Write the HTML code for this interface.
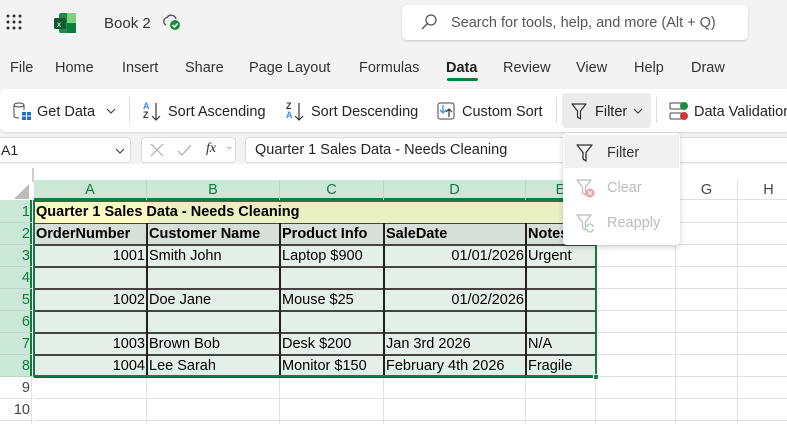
<!DOCTYPE html>
<html><head><meta charset="utf-8"><style>
*{box-sizing:border-box;margin:0;padding:0}
body{width:787px;height:424px;overflow:hidden;background:#f3f3f3;font-family:"Segoe UI","Liberation Sans",sans-serif;position:relative;color:#242424}
.a{position:absolute}
.t{font-size:14px;white-space:nowrap}
.grid{position:absolute;left:0;top:164px;width:787px;height:260px;background:#fff}
.cell{position:absolute;font-family:"Liberation Sans",Arial,sans-serif;font-size:14.5px;color:#000;white-space:nowrap;overflow:hidden;line-height:23px;padding:0 2px}
</style></head><body>
<div class="a" style="left:6px;top:14px;width:16px;height:16px">
<svg width="16" height="16"><g fill="#333"><circle cx="2" cy="2" r="1.5"/><circle cx="8" cy="2" r="1.5"/><circle cx="14" cy="2" r="1.5"/><circle cx="2" cy="8" r="1.5"/><circle cx="8" cy="8" r="1.5"/><circle cx="14" cy="8" r="1.5"/><circle cx="2" cy="14" r="1.5"/><circle cx="8" cy="14" r="1.5"/><circle cx="14" cy="14" r="1.5"/></g></svg></div>
<svg class="a" style="left:54px;top:13px" width="22" height="20"><rect x="5" y="0" width="17" height="20" rx="2" fill="#1f8a4c"/><rect x="13" y="0" width="9" height="10" fill="#7fd07c"/><rect x="13" y="10" width="9" height="10" fill="#107c41"/><rect x="0" y="5" width="12" height="11" rx="1.5" fill="#0e5c2f"/><text x="3" y="14" font-size="8" fill="#fff" font-family="Liberation Sans">x</text></svg>
<div class="a t" style="left:104px;top:15px;font-size:15px;color:#333">Book 2</div>
<svg class="a" style="left:162px;top:13px" width="20" height="18"><path d="M4 12 a4 4 0 0 1 1-7.5 a5 5 0 0 1 9 1.5" fill="none" stroke="#555" stroke-width="1.4"/><circle cx="13" cy="12" r="5" fill="#1e8c3e"/><path d="M10.5 12 l2 2 l3-3.5" stroke="#fff" fill="none" stroke-width="1.4"/></svg>
<div class="a" style="left:402px;top:5px;width:346px;height:35px;background:#fff;border-radius:5px;box-shadow:0 1px 2px rgba(0,0,0,.2)"></div>
<svg class="a" style="left:421px;top:14px" width="16" height="16"><circle cx="10" cy="6" r="5" fill="none" stroke="#555" stroke-width="1.3"/><path d="M6.5 9.5 L1 15" stroke="#555" stroke-width="1.4"/></svg>
<div class="a t" style="left:451px;top:15px;font-size:14.5px;color:#555">Search for tools, help, and more (Alt + Q)</div>
<div class="a t" style="left:10px;top:60px;font-size:14.5px;color:#333">File</div>
<div class="a t" style="left:55px;top:60px;font-size:14.5px;color:#333">Home</div>
<div class="a t" style="left:122px;top:60px;font-size:14.5px;color:#333">Insert</div>
<div class="a t" style="left:185px;top:60px;font-size:14.5px;color:#333">Share</div>
<div class="a t" style="left:249px;top:60px;font-size:14.5px;color:#333">Page Layout</div>
<div class="a t" style="left:359px;top:60px;font-size:14.5px;color:#333">Formulas</div>
<div class="a t" style="left:446px;top:60px;font-size:14.5px;color:#222;font-weight:bold">Data</div>
<div class="a" style="left:447px;top:78px;width:31px;height:3px;background:#107c41;border-radius:2px"></div>
<div class="a t" style="left:503px;top:60px;font-size:14.5px;color:#333">Review</div>
<div class="a t" style="left:576px;top:60px;font-size:14.5px;color:#333">View</div>
<div class="a t" style="left:634px;top:60px;font-size:14.5px;color:#333">Help</div>
<div class="a t" style="left:691px;top:60px;font-size:14.5px;color:#333">Draw</div>
<div class="a" style="left:0;top:89px;width:787px;height:43px;background:#fff;border-radius:6px 0 0 6px;box-shadow:0 1px 2px rgba(0,0,0,.12)"></div>
<svg class="a" style="left:12px;top:101px" width="20" height="20"><ellipse cx="7" cy="4" rx="5" ry="2" fill="none" stroke="#444"/><path d="M2 4 v11 q0 2 5 2 M12 4 v5" fill="none" stroke="#444"/><rect x="10" y="11" width="9" height="8" fill="#1a73c8"/><path d="M14.5 11v8M10 15h9" stroke="#fff"/></svg>
<div class="a t" style="left:37px;top:104px;font-size:14.5px">Get Data</div>
<svg class="a" style="left:106px;top:108px" width="10" height="7"><path d="M1 1l4 4 4-4" fill="none" stroke="#444" stroke-width="1.2"/></svg>
<div class="a" style="left:129px;top:97px;width:1px;height:26px;background:#ddd"></div>
<div class="a" style="left:143px;top:102px;font:bold 9px 'Liberation Sans';color:#3a8ee6;line-height:9px">A<br><span style="color:#333">Z</span></div>
<svg class="a" style="left:151px;top:102px" width="10" height="20"><path d="M5 1v17M1 14l4 4 4-4" fill="none" stroke="#333" stroke-width="1.2"/></svg>
<div class="a t" style="left:168px;top:104px;font-size:14.5px">Sort Ascending</div>
<div class="a" style="left:286px;top:102px;font:bold 9px 'Liberation Sans';color:#333;line-height:9px">Z<br><span style="color:#3a8ee6">A</span></div>
<svg class="a" style="left:294px;top:102px" width="10" height="20"><path d="M5 1v17M1 14l4 4 4-4" fill="none" stroke="#333" stroke-width="1.2"/></svg>
<div class="a t" style="left:311px;top:104px;font-size:14.5px">Sort Descending</div>
<svg class="a" style="left:437px;top:102px" width="18" height="18"><rect x="1" y="1" width="16" height="16" rx="2" fill="none" stroke="#444"/><path d="M6 3v8M3 8l3 3 3-3" stroke="#3a8ee6" fill="none" stroke-width="1.3"/><path d="M12 15v-8M9 10l3-3 3 3" stroke="#333" fill="none" stroke-width="1.2"/></svg>
<div class="a t" style="left:462px;top:104px;font-size:14.5px">Custom Sort</div>
<div class="a" style="left:556px;top:97px;width:1px;height:26px;background:#ddd"></div>
<div class="a" style="left:562px;top:93px;width:89px;height:35px;background:#ebebeb;border-radius:4px"></div>
<svg class="a" style="left:571px;top:103px" width="16" height="17"><path d="M1 1h14l-5.5 7v8l-3-2v-6z" fill="none" stroke="#333" stroke-width="1.2" stroke-linejoin="round"/></svg>
<div class="a t" style="left:595px;top:104px;font-size:14.5px">Filter</div>
<svg class="a" style="left:633px;top:108px" width="10" height="7"><path d="M1 1l4 4 4-4" fill="none" stroke="#444" stroke-width="1.2"/></svg>
<div class="a" style="left:656px;top:97px;width:1px;height:26px;background:#ddd"></div>
<svg class="a" style="left:669px;top:101px" width="20" height="20"><rect x="1" y="2" width="12" height="6" rx="1" fill="none" stroke="#444"/><rect x="1" y="12" width="12" height="6" rx="1" fill="none" stroke="#444"/><circle cx="15" cy="5" r="4" fill="#1e8c3e"/><circle cx="15" cy="15" r="4" fill="#d13438"/></svg>
<div class="a t" style="left:694px;top:104px;font-size:14.5px">Data Validation</div>
<div class="a" style="left:-4px;top:137px;width:135px;height:26px;background:#fff;border:1px solid #ddd;border-radius:4px"></div>
<div class="a t" style="left:1px;top:142px;font-size:14px">A1</div>
<svg class="a" style="left:115px;top:148px" width="10" height="7"><path d="M1 1l4 4 4-4" fill="none" stroke="#444" stroke-width="1.2"/></svg>
<div class="a" style="left:141px;top:137px;width:95px;height:26px;background:#fff;border:1px solid #ddd;border-radius:4px"></div>
<svg class="a" style="left:150px;top:143px" width="60" height="14"><path d="M1 1l12 12M13 1L1 13" stroke="#aaa" stroke-width="1.2"/><path d="M28 8l4 4 9-10" fill="none" stroke="#aaa" stroke-width="1.2"/></svg>
<div class="a" style="left:206px;top:141px;font:italic 14px 'Liberation Serif';color:#333">fx</div>
<div class="a" style="left:225px;top:141px;font-size:10px;color:#999">⌄</div>
<div class="a" style="left:245px;top:137px;width:560px;height:26px;background:#fff;border:1px solid #ddd;border-radius:4px"></div>
<div class="a t" style="left:255px;top:142px;font-size:14.5px">Quarter 1 Sales Data - Needs Cleaning</div>
<div class="grid"></div>
<div class="a" style="left:32px;top:168px;width:2px;height:14px;background:#ccc"></div>
<svg class="a" style="left:14px;top:184px" width="16" height="15"><path d="M15 0v15H0z" fill="#bbb"/></svg>
<div class="a" style="left:34px;top:180px;width:562px;height:20px;background:#cbe8d7;border-bottom:2px solid #107c41"></div>
<div class="a" style="left:596px;top:180px;width:191px;height:20px;background:#fff;border-bottom:1px solid #e1e1e1"></div>
<div class="a" style="left:0;top:200px;width:32px;height:177px;background:#cbe8d7;border-right:2px solid #107c41"></div>
<div class="a" style="left:0;top:377px;width:32px;height:47px;background:#fff;border-right:1px solid #e1e1e1"></div>
<div class="a" style="left:34px;top:201px;width:562px;height:22px;background:#e9f0c4"></div>
<div class="a" style="left:34px;top:201px;width:114px;height:22px;background:#fff9c4"></div>
<div class="a" style="left:34px;top:223px;width:562px;height:22px;background:#d6dfd9"></div>
<div class="a" style="left:34px;top:245px;width:562px;height:132px;background:#e5efe9"></div>
<div id="g"></div>
<div class="a" style="left:33px;top:200px;width:564px;height:177px;border:2px solid #107c41"></div>
<div class="a" style="left:593px;top:374px;width:6px;height:6px;background:#107c41;border:1px solid #fff"></div>
<div class="a" style="left:563px;top:133px;width:117px;height:112px;background:#fff;border-radius:4px;box-shadow:0 2px 6px rgba(0,0,0,.2)"></div>
<div class="a" style="left:564px;top:135px;width:115px;height:33px;background:#f0f0f0"></div>
<svg class="a" style="left:576px;top:144px" width="17" height="18"><path d="M1 1h15l-6 7.5v8.5l-3-2v-6.5z" fill="none" stroke="#333" stroke-width="1.3" stroke-linejoin="round"/></svg>
<div class="a t" style="left:607px;top:145px;font-size:14.5px;color:#333">Filter</div>
<svg class="a" style="left:576px;top:179px" width="20" height="20"><path d="M1 1h14l-5.5 7v8l-3-2v-6z" fill="none" stroke="#bbb" stroke-width="1.2" stroke-linejoin="round"/><circle cx="14" cy="14" r="4.5" fill="#f1a0a3"/><path d="M12 12l4 4M16 12l-4 4" stroke="#fff"/></svg>
<div class="a t" style="left:607px;top:180px;font-size:14.5px;color:#bbb">Clear</div>
<svg class="a" style="left:576px;top:214px" width="20" height="20"><path d="M1 1h14l-5.5 7v8l-3-2v-6z" fill="none" stroke="#bbb" stroke-width="1.2" stroke-linejoin="round"/><path d="M11 13a3 3 0 0 1 6 0M17 15a3 3 0 0 1-6 0" fill="none" stroke="#9fd3a8" stroke-width="1.3"/></svg>
<div class="a t" style="left:607px;top:215px;font-size:14.5px;color:#bbb">Reapply</div>
<script>
var cols=[[34,147,'A'],[147,280,'B'],[280,384,'C'],[384,526,'D'],[526,596,'E'],[596,676,'F'],[676,738,'G'],[738,800,'H']];
var h='';
cols.forEach(function(c,i){var sel=i<5;
 h+='<div class="a" style="left:'+c[0]+'px;top:180px;width:'+(c[1]-c[0])+'px;height:20px;text-align:center;font:14.5px Liberation Sans,sans-serif;line-height:21px;color:'+(sel?'#107c41':'#444')+';border-right:1px solid '+(sel?'#b5d6c2':'#e1e1e1')+'">'+(c[2]=='F'?'':c[2])+'</div>';
 h+='<div class="a" style="left:'+(c[1]-1)+'px;top:'+(sel?377:201)+'px;width:1px;height:'+(sel?47:223)+'px;background:#e1e1e1"></div>';
});
for(var r=1;r<=10;r++){var y=201+22*(r-1),sel=r<=8;
 h+='<div class="a" style="left:0;top:'+y+'px;width:30px;height:22px;text-align:right;font:14.5px Liberation Sans,sans-serif;line-height:23px;color:'+(sel?'#107c41':'#444')+'">'+r+'</div>';
 h+='<div class="a" style="left:0;top:'+(y+21)+'px;width:32px;height:1px;background:'+(sel?'#b5d6c2':'#e1e1e1')+'"></div>';
 h+='<div class="a" style="left:'+(sel?596:34)+'px;top:'+(y+21)+'px;width:800px;height:1px;background:#e1e1e1"></div>';
}
for(var r=2;r<=8;r++){var y=223+22*(r-2);
 h+='<div class="a" style="left:34px;top:'+(y+21)+'px;width:562px;height:1.5px;background:#444"></div>';
 h+='<div class="a" style="left:34px;top:'+y+'px;width:562px;height:1px;background:#444"></div>';
 [147,280,384,526].forEach(function(x){h+='<div class="a" style="left:'+(x-1)+'px;top:'+y+'px;width:1.5px;height:22px;background:#222"></div>';});
}
function c(col,row,txt,al,b){var x=cols[col];h+='<div class="cell" style="left:'+x[0]+'px;top:'+(201+22*(row-1))+'px;width:'+(x[1]-x[0])+'px;text-align:'+(al||'left')+';'+(b?'font-weight:bold':'')+'">'+txt+'</div>';}
h+='<div class="cell" style="left:34px;top:201px;font-weight:bold">Quarter 1 Sales Data - Needs Cleaning</div>';
['OrderNumber','Customer Name','Product Info','SaleDate','Notes'].forEach(function(t,i){c(i,2,t,'left',1)});
c(0,3,'1001','right');c(1,3,'Smith John');c(2,3,'Laptop $900');c(3,3,'01/01/2026','right');c(4,3,'Urgent');
c(0,5,'1002','right');c(1,5,'Doe Jane');c(2,5,'Mouse $25');c(3,5,'01/02/2026','right');
c(0,7,'1003','right');c(1,7,'Brown Bob');c(2,7,'Desk $200');c(3,7,'Jan 3rd 2026');c(4,7,'N/A');
c(0,8,'1004','right');c(1,8,'Lee Sarah');c(2,8,'Monitor $150');c(3,8,'February 4th 2026');c(4,8,'Fragile');
document.getElementById('g').outerHTML=h;
</script>
</body></html>
